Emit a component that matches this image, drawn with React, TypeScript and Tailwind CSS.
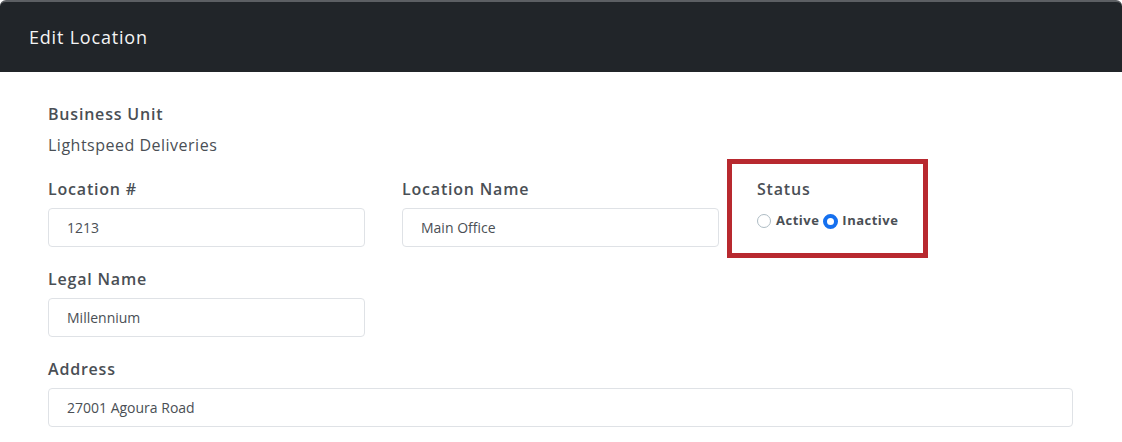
import React from 'react'

type FieldProps = {
    label: string
    value: string
    className?: string
}

function Field({ label, value, className }: FieldProps) {
    return (
        <div className={className}>
            <label className="block text-[16px] leading-6 font-semibold tracking-[0.8px] text-[#4a4f55] mb-[7px]">
                {label}
            </label>
            <input
                className="block w-full h-[39px] px-[18px] text-[14px] text-[#4a4f55] bg-white border border-[#dfe2e6] rounded-[4px] outline-none"
                type="text"
                defaultValue={value}
                readOnly
            />
        </div>
    )
}

function StatusBox() {
    return (
        <div className="w-[201px] h-[99px] -ml-[29px] -mt-[18px] -mb-[11px] border-[5px] border-[#b8292f] pl-[25px] pt-[13px]">
            <div className="text-[16px] leading-6 font-semibold tracking-[0.8px] text-[#4a4f55]">Status</div>
            <div className="mt-[10px] flex items-center h-5 text-[13px] font-bold tracking-[0.5px] text-[#4a4f55]">
                <span className="w-[14px] h-[14px] rounded-full border-[1.5px] border-[#aebcc4] bg-white" />
                <span className="ml-[5px]">Active</span>
                <span className="ml-[4px] w-[15px] h-[15px] rounded-full border-[4px] border-[#1570ef] bg-white" />
                <span className="ml-[4px]">Inactive</span>
            </div>
        </div>
    )
}

export default function App() {
    return (
        <div className="w-[1122px] h-[442px] bg-white overflow-hidden font-['Open_Sans',sans-serif]">
            <div className="h-[72px] bg-[#212529] border-t-2 border-[#5c5f63] rounded-t-[6px] flex items-center pl-[29px]">
                <h2 className="text-[18px] font-medium tracking-[0.8px] text-[#f4f4f4]">Edit Location</h2>
            </div>
            <div className="pt-[30px] px-[48px]">
                <div className="mb-5">
                    <div className="text-[16px] leading-6 font-semibold tracking-[0.8px] text-[#4a4f55] mb-[7px]">Business Unit</div>
                    <div className="text-[16px] leading-6 tracking-[0.5px] text-[#4a4f55]">Lightspeed Deliveries</div>
                </div>
                <div className="grid grid-cols-[317px_317px_1fr] gap-x-[37px] mb-5">
                    <Field label="Location #" value="1213" />
                    <Field label="Location Name" value="Main Office" />
                    <StatusBox />
                </div>
                <div className="grid grid-cols-[317px_317px_1fr] gap-x-[37px] mb-5">
                    <Field label="Legal Name" value="Millennium" />
                </div>
                <Field label="Address" value="27001 Agoura Road" className="w-[1025px]" />
            </div>
        </div>
    )
}
